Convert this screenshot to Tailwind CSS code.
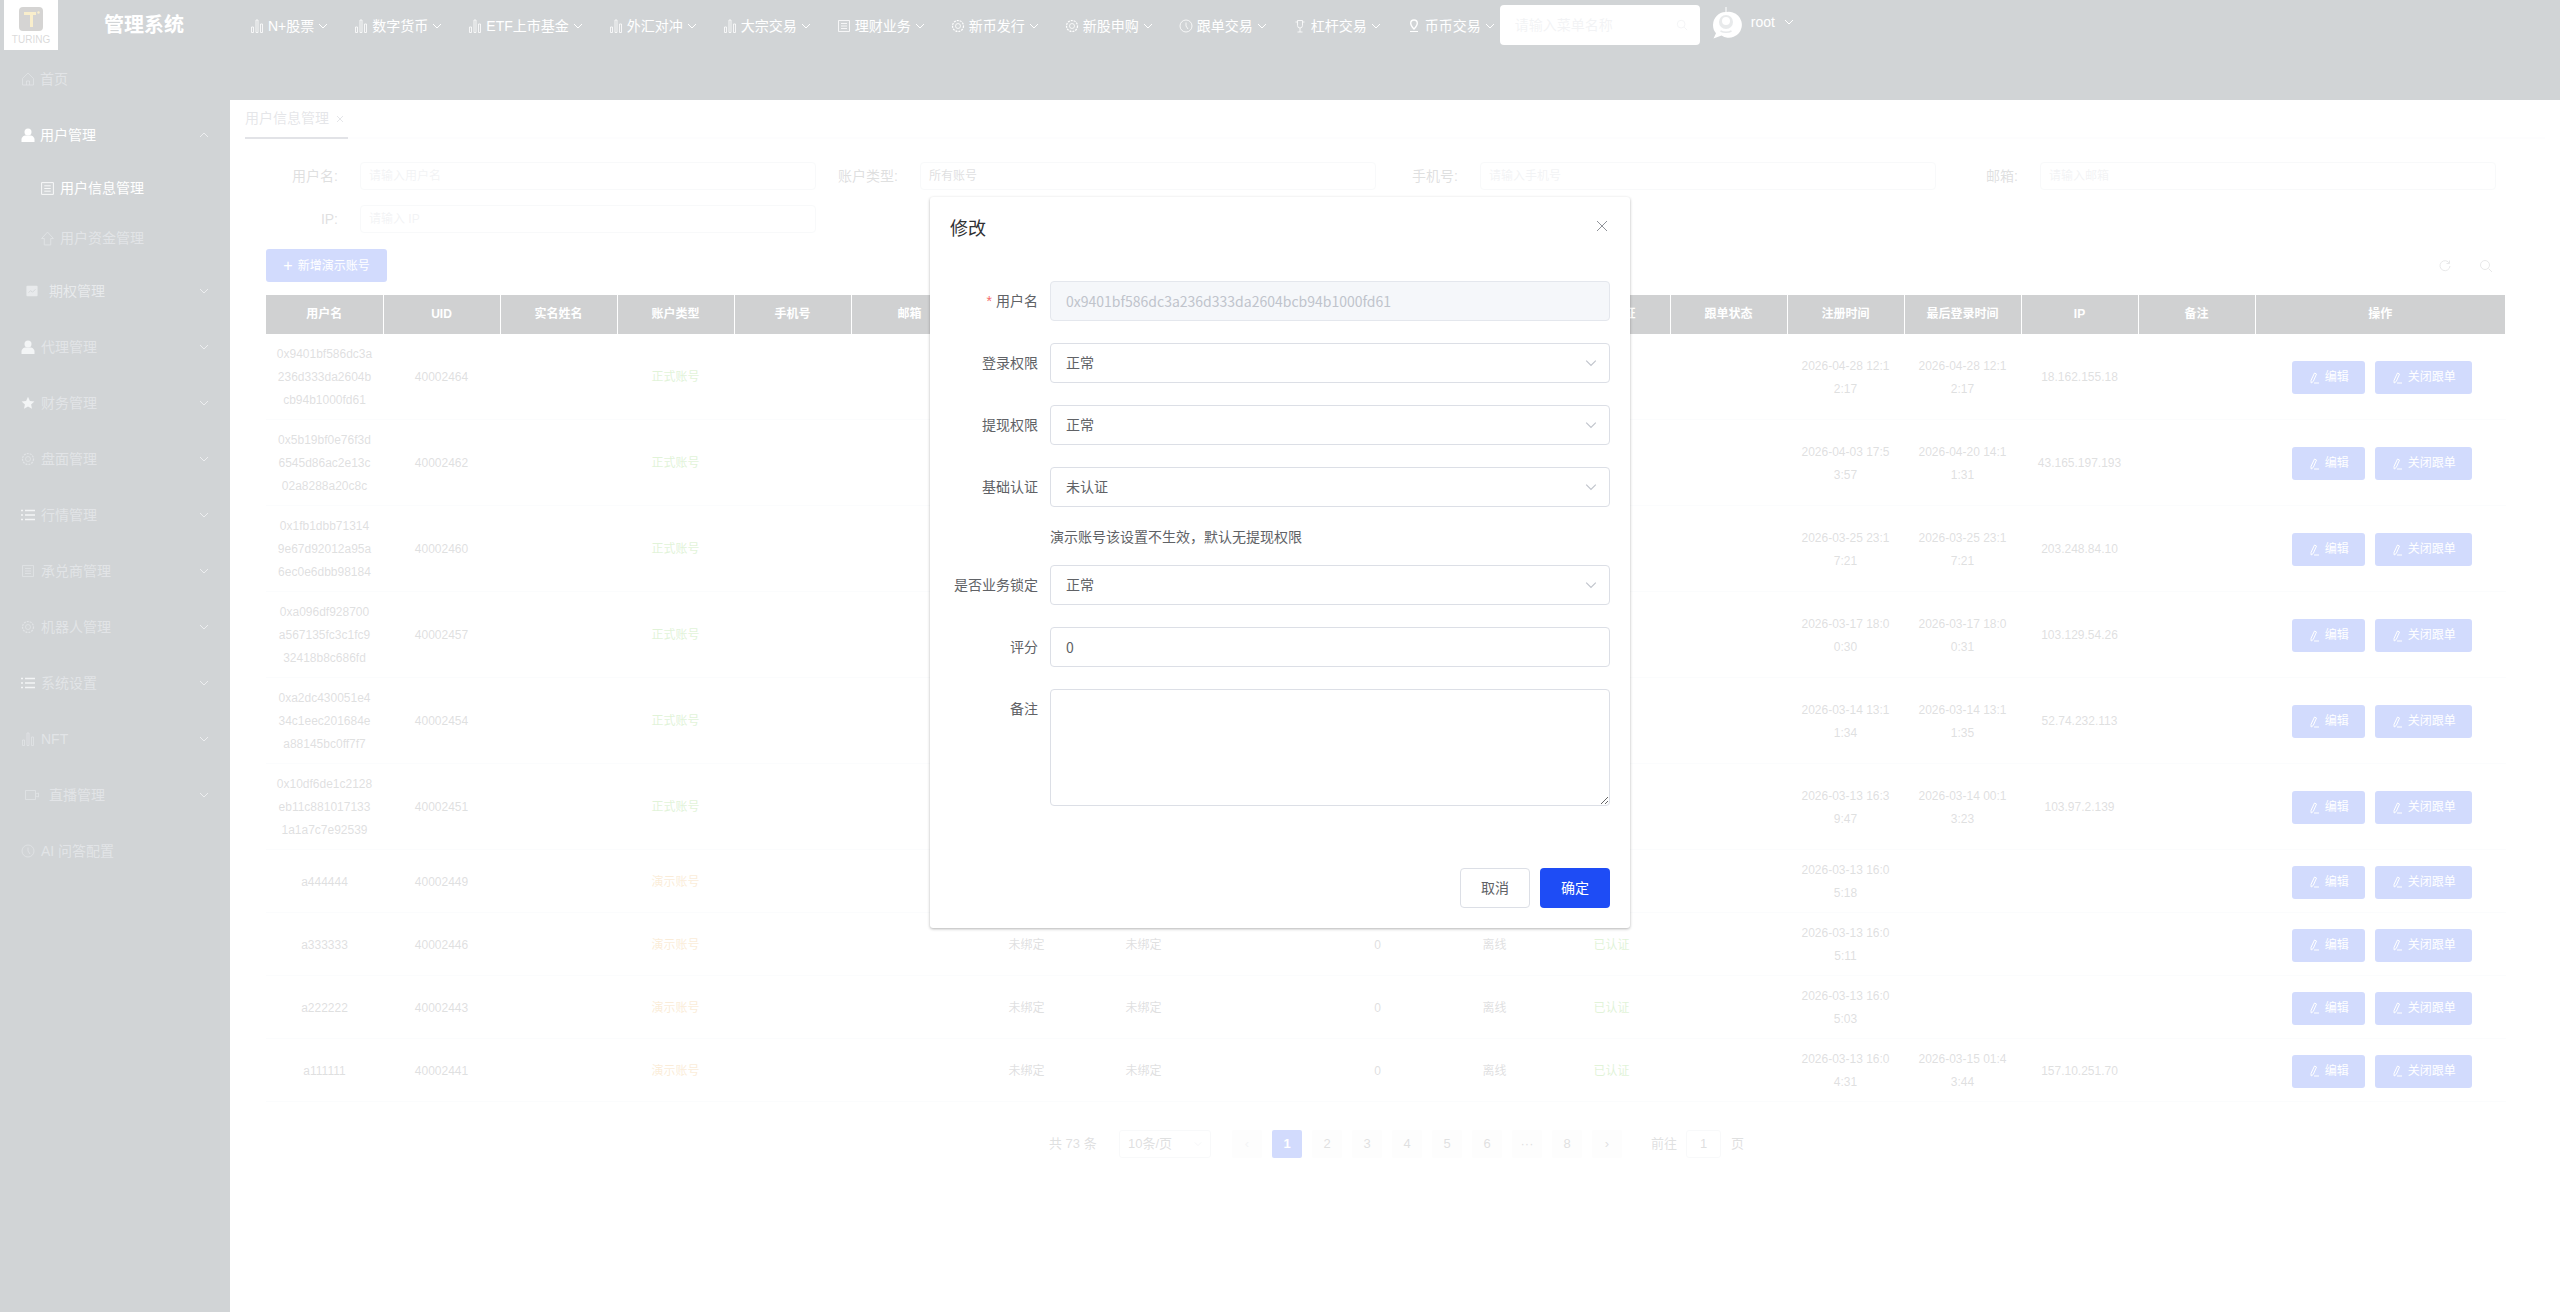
<!DOCTYPE html>
<html lang="zh-CN">
<head>
<meta charset="utf-8">
<title>管理系统</title>
<script src="https://cdn.jsdelivr.net/npm/@tailwindcss/browser@4"></script>
</head>
<body class="m-0">
<svg class="hidden" xmlns="http://www.w3.org/2000/svg">
  <symbol id="bars" viewBox="0 0 14 14"><path fill="none" stroke="currentColor" stroke-width=".8" d="M1.500 8h2v5.500h-2zM6 1h2v12.500H6zM10.500 5h2v8.500h-2z"/></symbol>
  <symbol id="down" viewBox="0 0 10 10"><path fill="none" stroke="currentColor" d="M1 3l4 4 4-4"/></symbol>
  <symbol id="up" viewBox="0 0 10 10"><path fill="none" stroke="currentColor" d="M1 7l4-4 4 4"/></symbol>
  <symbol id="doc" viewBox="0 0 14 14"><path fill="none" stroke="currentColor" stroke-width=".8" d="M1.500 1.500h11v11h-11zM4 4.500h6M4 7h6M4 9.500h6"/></symbol>
  <symbol id="gear" viewBox="0 0 14 14"><circle cx="7" cy="7" r="5.500" fill="none" stroke="currentColor" stroke-width="1.200" stroke-dasharray="2 1"/><circle cx="7" cy="7" r="2.500" fill="none" stroke="currentColor" stroke-width=".8"/></symbol>
  <symbol id="clock" viewBox="0 0 14 14"><circle cx="7" cy="7" r="6" fill="none" stroke="currentColor" stroke-width=".8"/><path fill="none" stroke="currentColor" stroke-width=".8" d="M7 3.500V7l2 3"/></symbol>
  <symbol id="cup" viewBox="0 0 14 14"><path fill="none" stroke="currentColor" stroke-width=".8" d="M4.500 1.500h5v5a2.500 2.500 0 0 1-5 0zM7 9v4M4.500 13h5M2.500 3h2M9.500 3h2"/></symbol>
  <symbol id="pin" viewBox="0 0 14 14"><path fill="none" stroke="currentColor" stroke-width="1.400" d="M7 1a3.300 3.300 0 0 1 3.300 3.300C10.300 6.500 7 10 7 10S3.700 6.500 3.700 4.300A3.300 3.300 0 0 1 7 1z"/><path fill="none" stroke="currentColor" d="M3 12.500h8"/></symbol>
  <symbol id="home" viewBox="0 0 14 14"><path fill="none" stroke="currentColor" stroke-width=".8" d="M7 1L1.500 6.500v6.500h11V6.500zM5.500 13V9h3v4"/></symbol>
  <symbol id="user" viewBox="0 0 14 14"><circle cx="7" cy="4" r="3.500" fill="currentColor"/><path fill="currentColor" d="M.5 14v-2.500C.5 9 3 7.500 4.500 7.500h5c1.500 0 4 1.500 4 4V14z"/></symbol>
  <symbol id="up-house" viewBox="0 0 14 14"><path fill="none" stroke="currentColor" stroke-width=".8" d="M7 1L1.500 7h2.500v6h6V7h2.500z"/></symbol>
  <symbol id="pic" viewBox="0 0 14 14"><rect x=".5" y="1" width="13" height="12" rx="1" fill="currentColor"/><path fill="none" stroke="#192832" d="M3 9l2.500-2.500 2 2L11 5"/></symbol>
  <symbol id="star" viewBox="0 0 14 14"><path fill="currentColor" d="M7 .8l1.900 4.100 4.500.5-3.300 3 .9 4.400L7 10.600 3 12.800l.9-4.400-3.300-3 4.500-.5z"/></symbol>
  <symbol id="list" viewBox="0 0 14 14"><path fill="none" stroke="currentColor" stroke-width="1.400" d="M4 2.500h10M4 7h10M4 11.500h10M0 2.500h2M0 7h2M0 11.500h2"/></symbol>
  <symbol id="video" viewBox="0 0 14 14"><path fill="none" stroke="currentColor" stroke-width=".8" d="M.5 2.500h10v9H.5zM10.500 6l3-1v4l-3-1"/></symbol>
  <symbol id="pen" viewBox="0 0 12 12"><path fill="none" stroke="currentColor" d="M6.500 1L3 8.500l.2 2.500 2-1.500L8.500 2zM6 11h5"/></symbol>
</svg>

<div class="relative flex h-[1312px] w-[2560px] flex-col overflow-hidden bg-[#192832] [font-family:'Liberation_Sans','Noto_Sans_CJK_SC',sans-serif]">

  <header class="flex h-[51px] shrink-0 items-start text-white">
    <div class="ml-[4px] flex h-[50px] w-[54px] flex-col items-center bg-white pt-[7px]">
      <svg class="h-[24px] w-[24px]" viewBox="0 0 24 24"><rect width="24" height="24" rx="4" fill="#2b2a22"/><path fill="#e2ab00" d="M5 5h12v3h-3v12h-3V8H5z"/><circle cx="19.500" cy="5.500" r="1.200" fill="#e2ab00"/></svg>
      <span class="mt-[2px] text-[10px] leading-[14px] text-[#444]">TURING</span>
    </div>
    <div class="ml-[46px] mt-[12px] text-[20px] font-bold leading-[26px]">管理系统</div>
    <nav class="ml-[66px] flex h-[50px] items-center gap-[26px] pt-[2px] text-[14px] text-white">
      <a class="flex items-center"><svg class="mr-[4px] h-[14px] w-[14px]"><use href="#bars"/></svg>N+股票<svg class="ml-[4px] h-[10px] w-[10px]"><use href="#down"/></svg></a>
      <a class="flex items-center"><svg class="mr-[4px] h-[14px] w-[14px]"><use href="#bars"/></svg>数字货币<svg class="ml-[4px] h-[10px] w-[10px]"><use href="#down"/></svg></a>
      <a class="flex items-center"><svg class="mr-[4px] h-[14px] w-[14px]"><use href="#bars"/></svg>ETF上市基金<svg class="ml-[4px] h-[10px] w-[10px]"><use href="#down"/></svg></a>
      <a class="flex items-center"><svg class="mr-[4px] h-[14px] w-[14px]"><use href="#bars"/></svg>外汇对冲<svg class="ml-[4px] h-[10px] w-[10px]"><use href="#down"/></svg></a>
      <a class="flex items-center"><svg class="mr-[4px] h-[14px] w-[14px]"><use href="#bars"/></svg>大宗交易<svg class="ml-[4px] h-[10px] w-[10px]"><use href="#down"/></svg></a>
      <a class="flex items-center"><svg class="mr-[4px] h-[14px] w-[14px]"><use href="#doc"/></svg>理财业务<svg class="ml-[4px] h-[10px] w-[10px]"><use href="#down"/></svg></a>
      <a class="flex items-center"><svg class="mr-[4px] h-[14px] w-[14px]"><use href="#gear"/></svg>新币发行<svg class="ml-[4px] h-[10px] w-[10px]"><use href="#down"/></svg></a>
      <a class="flex items-center"><svg class="mr-[4px] h-[14px] w-[14px]"><use href="#gear"/></svg>新股申购<svg class="ml-[4px] h-[10px] w-[10px]"><use href="#down"/></svg></a>
      <a class="flex items-center"><svg class="mr-[4px] h-[14px] w-[14px]"><use href="#clock"/></svg>跟单交易<svg class="ml-[4px] h-[10px] w-[10px]"><use href="#down"/></svg></a>
      <a class="flex items-center"><svg class="mr-[4px] h-[14px] w-[14px]"><use href="#cup"/></svg>杠杆交易<svg class="ml-[4px] h-[10px] w-[10px]"><use href="#down"/></svg></a>
      <a class="flex items-center"><svg class="mr-[4px] h-[14px] w-[14px]"><use href="#pin"/></svg>币币交易<svg class="ml-[4px] h-[10px] w-[10px]"><use href="#down"/></svg></a>
    </nav>
    <div class="ml-[5px] mt-[5px] flex h-[40px] w-[200px] items-center justify-between rounded-[4px] bg-white pl-[15px] pr-[12px] text-[14px] text-[#c0c4cc]">请输入菜单名称<svg class="h-[12px] w-[12px]" viewBox="0 0 14 14"><circle cx="6" cy="6" r="4.500" fill="none" stroke="currentColor"/><path stroke="currentColor" d="M9.500 9.500l3.500 3.500"/></svg></div>
    <svg class="ml-[10px] mt-[7px] h-[32px] w-[32px]" viewBox="0 0 32 32"><path fill="#fff" d="M15.500 0v5A13 13 0 0 0 3 18c0 3.500 1.200 6.200 3 8.200L3.500 31.500l8-3A13 13 0 1 0 16.500 5V0z"/><circle cx="16" cy="15" r="7" fill="#8a959d"/><circle cx="16" cy="14" r="4" fill="#fff"/><path fill="none" stroke="#8a959d" stroke-width="1.500" d="M10.500 24c3 1.500 8 1.500 11 0"/></svg>
    <span class="ml-[9px] mt-[13px] text-[14px] leading-[18px]">root</span>
    <svg class="ml-[9px] mt-[17px] h-[10px] w-[10px]"><use href="#down"/></svg>
  </header>

  <div class="flex flex-1">
    <aside class="w-[230px] shrink-0 text-[14px] text-[#6d7a85]">
      <div class="flex h-[56px] items-center pl-[21px]"><svg class="mr-[5px] h-[14px] w-[14px]"><use href="#home"/></svg>首页</div>
      <div class="relative flex h-[56px] items-center pl-[21px] text-white"><svg class="mr-[5px] h-[14px] w-[14px]"><use href="#user"/></svg>用户管理<svg class="absolute left-[199px] h-[10px] w-[10px] text-[#a3acb3]"><use href="#up"/></svg></div>
      <div class="flex h-[50px] items-center pl-[40px] text-white"><svg class="mr-[5px] h-[15px] w-[15px]"><use href="#doc"/></svg>用户信息管理</div>
      <div class="flex h-[50px] items-center pl-[40px]"><svg class="mr-[5px] h-[15px] w-[15px]"><use href="#up-house"/></svg>用户资金管理</div>
      <div class="relative flex h-[56px] items-center pl-[26px] text-[#8e98a1]"><svg class="mr-[11px] h-[12px] w-[12px]"><use href="#pic"/></svg>期权管理<svg class="absolute left-[199px] h-[10px] w-[10px] text-[#a3acb3]"><use href="#down"/></svg></div>
      <div class="relative flex h-[56px] items-center pl-[21px]"><svg class="mr-[6px] h-[14px] w-[14px] text-[#c5ccd2]"><use href="#user"/></svg>代理管理<svg class="absolute left-[199px] h-[10px] w-[10px] text-[#a3acb3]"><use href="#down"/></svg></div>
      <div class="relative flex h-[56px] items-center pl-[21px]"><svg class="mr-[6px] h-[14px] w-[14px] text-[#c5ccd2]"><use href="#star"/></svg>财务管理<svg class="absolute left-[199px] h-[10px] w-[10px] text-[#a3acb3]"><use href="#down"/></svg></div>
      <div class="relative flex h-[56px] items-center pl-[21px]"><svg class="mr-[6px] h-[14px] w-[14px]"><use href="#gear"/></svg>盘面管理<svg class="absolute left-[199px] h-[10px] w-[10px] text-[#a3acb3]"><use href="#down"/></svg></div>
      <div class="relative flex h-[56px] items-center pl-[21px]"><svg class="mr-[6px] h-[14px] w-[14px] text-[#c5ccd2]"><use href="#list"/></svg>行情管理<svg class="absolute left-[199px] h-[10px] w-[10px] text-[#a3acb3]"><use href="#down"/></svg></div>
      <div class="relative flex h-[56px] items-center pl-[21px]"><svg class="mr-[6px] h-[14px] w-[14px]"><use href="#doc"/></svg>承兑商管理<svg class="absolute left-[199px] h-[10px] w-[10px] text-[#a3acb3]"><use href="#down"/></svg></div>
      <div class="relative flex h-[56px] items-center pl-[21px]"><svg class="mr-[6px] h-[14px] w-[14px]"><use href="#gear"/></svg>机器人管理<svg class="absolute left-[199px] h-[10px] w-[10px] text-[#a3acb3]"><use href="#down"/></svg></div>
      <div class="relative flex h-[56px] items-center pl-[21px]"><svg class="mr-[6px] h-[14px] w-[14px] text-[#c5ccd2]"><use href="#list"/></svg>系统设置<svg class="absolute left-[199px] h-[10px] w-[10px] text-[#a3acb3]"><use href="#down"/></svg></div>
      <div class="relative flex h-[56px] items-center pl-[21px]"><svg class="mr-[6px] h-[14px] w-[14px]"><use href="#bars"/></svg>NFT<svg class="absolute left-[199px] h-[10px] w-[10px] text-[#a3acb3]"><use href="#down"/></svg></div>
      <div class="relative flex h-[56px] items-center pl-[25px]"><svg class="mr-[10px] h-[14px] w-[14px]"><use href="#video"/></svg>直播管理<svg class="absolute left-[199px] h-[10px] w-[10px] text-[#a3acb3]"><use href="#down"/></svg></div>
      <div class="flex h-[56px] items-center pl-[21px]"><svg class="mr-[6px] h-[14px] w-[14px]"><use href="#clock"/></svg>AI 问答配置</div>
    </aside>

    <div class="flex flex-1 flex-col pt-[49px]">
      <main class="flex-1 bg-white">
        <div class="mx-[15px] h-[39px] border-b-2 border-[#f5f6fa]">
          <div class="flex h-[39px] w-[103px] items-center border-b-2 border-[#6e7389] text-[14px] text-[#7d8190]">用户信息管理<svg class="ml-[7px] h-[8px] w-[8px]" viewBox="0 0 8 8"><path fill="none" stroke="currentColor" d="M1 1l6 6M7 1L1 7"/></svg></div>
        </div>

        <form class="ml-[30px] mt-[23px] grid w-[2240px] grid-cols-4 gap-y-[15px] text-[14px] text-[#606266]">
          <div class="flex items-center"><label class="w-[78px] text-right">用户名:</label><div class="ml-[22px] flex h-[28px] w-[456px] items-center rounded-[4px] border border-[#dcdfe6] px-[8px] text-[12px] text-[#c0c4cc]">请输入用户名</div></div>
          <div class="flex items-center"><label class="w-[78px] text-right">账户类型:</label><div class="ml-[22px] flex h-[28px] w-[456px] items-center rounded-[4px] border border-[#dcdfe6] px-[8px] text-[12px] text-[#606266]">所有账号</div></div>
          <div class="flex items-center"><label class="w-[78px] text-right">手机号:</label><div class="ml-[22px] flex h-[28px] w-[456px] items-center rounded-[4px] border border-[#dcdfe6] px-[8px] text-[12px] text-[#c0c4cc]">请输入手机号</div></div>
          <div class="flex items-center"><label class="w-[78px] text-right">邮箱:</label><div class="ml-[22px] flex h-[28px] w-[456px] items-center rounded-[4px] border border-[#dcdfe6] px-[8px] text-[12px] text-[#c0c4cc]">请输入邮箱</div></div>
          <div class="flex items-center"><label class="w-[78px] text-right">IP:</label><div class="ml-[22px] flex h-[28px] w-[456px] items-center rounded-[4px] border border-[#dcdfe6] px-[8px] text-[12px] text-[#c0c4cc]">请输入 IP</div></div>
        </form>

        <div class="ml-[36px] mr-[54px] mt-[16px] flex h-[33px] items-center justify-between">
          <button class="flex h-[33px] w-[121px] items-center justify-center rounded-[3px] bg-[#1e4cf5] text-[12px] text-white"><span class="mr-[5px] text-[16px] leading-none">+</span>新增演示账号</button>
          <div class="mr-[13px] flex items-center gap-[27px] text-[#8b8d92]">
            <svg class="h-[14px] w-[14px]" viewBox="0 0 14 14"><path fill="none" stroke="currentColor" d="M11.500 4.500A5 5 0 1 0 12 7M11.500 1.500v3h-3"/></svg>
            <svg class="h-[14px] w-[14px]" viewBox="0 0 14 14"><circle cx="6" cy="6" r="4.500" fill="none" stroke="currentColor"/><path stroke="currentColor" d="M9.500 9.500l3.500 3.500"/></svg>
          </div>
        </div>

        <table class="ml-[36px] mt-[13px] w-[2240px] table-fixed border-collapse text-center text-[12px] leading-[23px] text-[#606266] [&_td]:break-all [&_td]:border-b [&_td]:border-[#ebeef5] [&_td]:px-[10.5px] [&_td]:pb-[7px] [&_td]:pt-[9px] [&_th]:h-[39px] [&_th]:border-r [&_th]:border-white [&_th]:bg-[#141b20] [&_th]:font-bold [&_th]:text-white">
          <colgroup><col class="w-[117px]"><col class="w-[117px]"><col class="w-[117px]"><col class="w-[117px]"><col class="w-[117px]"><col class="w-[117px]"><col class="w-[117px]"><col class="w-[117px]"><col class="w-[117px]"><col class="w-[117px]"><col class="w-[117px]"><col class="w-[117px]"><col class="w-[117px]"><col class="w-[117px]"><col class="w-[117px]"><col class="w-[117px]"><col class="w-[117px]"><col></colgroup>
          <thead><tr><th>用户名</th><th>UID</th><th>实名姓名</th><th>账户类型</th><th>手机号</th><th>邮箱</th><th></th><th></th><th></th><th></th><th></th><th>实名认证</th><th>跟单状态</th><th>注册时间</th><th>最后登录时间</th><th>IP</th><th>备注</th><th>操作</th></tr></thead>
          <tbody>
            <tr><td>0x9401bf586dc3a236d333da2604bcb94b1000fd61</td><td>40002464</td><td></td><td class="text-[#67c23a]">正式账号</td><td></td><td></td><td></td><td></td><td></td><td></td><td></td><td></td><td></td><td>2026-04-28 12:12:17</td><td>2026-04-28 12:12:17</td><td>18.162.155.18</td><td></td><td><div class="flex justify-center gap-[10px] pl-[3px]"><button class="flex h-[33px] w-[73px] items-center justify-center rounded-[3px] bg-[#1e4cf5] text-white"><svg class="mr-[5px] h-[12px] w-[12px]"><use href="#pen"/></svg>编辑</button><button class="flex h-[33px] w-[97px] items-center justify-center rounded-[3px] bg-[#1e4cf5] text-white"><svg class="mr-[5px] h-[12px] w-[12px]"><use href="#pen"/></svg>关闭跟单</button></div></td></tr>
            <tr><td>0x5b19bf0e76f3d6545d86ac2e13c02a8288a20c8c</td><td>40002462</td><td></td><td class="text-[#67c23a]">正式账号</td><td></td><td></td><td></td><td></td><td></td><td></td><td></td><td></td><td></td><td>2026-04-03 17:53:57</td><td>2026-04-20 14:11:31</td><td>43.165.197.193</td><td></td><td><div class="flex justify-center gap-[10px] pl-[3px]"><button class="flex h-[33px] w-[73px] items-center justify-center rounded-[3px] bg-[#1e4cf5] text-white"><svg class="mr-[5px] h-[12px] w-[12px]"><use href="#pen"/></svg>编辑</button><button class="flex h-[33px] w-[97px] items-center justify-center rounded-[3px] bg-[#1e4cf5] text-white"><svg class="mr-[5px] h-[12px] w-[12px]"><use href="#pen"/></svg>关闭跟单</button></div></td></tr>
            <tr><td>0x1fb1dbb713149e67d92012a95a6ec0e6dbb98184</td><td>40002460</td><td></td><td class="text-[#67c23a]">正式账号</td><td></td><td></td><td></td><td></td><td></td><td></td><td></td><td></td><td></td><td>2026-03-25 23:17:21</td><td>2026-03-25 23:17:21</td><td>203.248.84.10</td><td></td><td><div class="flex justify-center gap-[10px] pl-[3px]"><button class="flex h-[33px] w-[73px] items-center justify-center rounded-[3px] bg-[#1e4cf5] text-white"><svg class="mr-[5px] h-[12px] w-[12px]"><use href="#pen"/></svg>编辑</button><button class="flex h-[33px] w-[97px] items-center justify-center rounded-[3px] bg-[#1e4cf5] text-white"><svg class="mr-[5px] h-[12px] w-[12px]"><use href="#pen"/></svg>关闭跟单</button></div></td></tr>
            <tr><td>0xa096df928700a567135fc3c1fc932418b8c686fd</td><td>40002457</td><td></td><td class="text-[#67c23a]">正式账号</td><td></td><td></td><td></td><td></td><td></td><td></td><td></td><td></td><td></td><td>2026-03-17 18:00:30</td><td>2026-03-17 18:00:31</td><td>103.129.54.26</td><td></td><td><div class="flex justify-center gap-[10px] pl-[3px]"><button class="flex h-[33px] w-[73px] items-center justify-center rounded-[3px] bg-[#1e4cf5] text-white"><svg class="mr-[5px] h-[12px] w-[12px]"><use href="#pen"/></svg>编辑</button><button class="flex h-[33px] w-[97px] items-center justify-center rounded-[3px] bg-[#1e4cf5] text-white"><svg class="mr-[5px] h-[12px] w-[12px]"><use href="#pen"/></svg>关闭跟单</button></div></td></tr>
            <tr><td>0xa2dc430051e434c1eec201684ea88145bc0ff7f7</td><td>40002454</td><td></td><td class="text-[#67c23a]">正式账号</td><td></td><td></td><td></td><td></td><td></td><td></td><td></td><td></td><td></td><td>2026-03-14 13:11:34</td><td>2026-03-14 13:11:35</td><td>52.74.232.113</td><td></td><td><div class="flex justify-center gap-[10px] pl-[3px]"><button class="flex h-[33px] w-[73px] items-center justify-center rounded-[3px] bg-[#1e4cf5] text-white"><svg class="mr-[5px] h-[12px] w-[12px]"><use href="#pen"/></svg>编辑</button><button class="flex h-[33px] w-[97px] items-center justify-center rounded-[3px] bg-[#1e4cf5] text-white"><svg class="mr-[5px] h-[12px] w-[12px]"><use href="#pen"/></svg>关闭跟单</button></div></td></tr>
            <tr><td>0x10df6de1c2128eb11c8810171331a1a7c7e92539</td><td>40002451</td><td></td><td class="text-[#67c23a]">正式账号</td><td></td><td></td><td></td><td></td><td></td><td></td><td></td><td></td><td></td><td>2026-03-13 16:39:47</td><td>2026-03-14 00:13:23</td><td>103.97.2.139</td><td></td><td><div class="flex justify-center gap-[10px] pl-[3px]"><button class="flex h-[33px] w-[73px] items-center justify-center rounded-[3px] bg-[#1e4cf5] text-white"><svg class="mr-[5px] h-[12px] w-[12px]"><use href="#pen"/></svg>编辑</button><button class="flex h-[33px] w-[97px] items-center justify-center rounded-[3px] bg-[#1e4cf5] text-white"><svg class="mr-[5px] h-[12px] w-[12px]"><use href="#pen"/></svg>关闭跟单</button></div></td></tr>
            <tr><td>a444444</td><td>40002449</td><td></td><td class="text-[#e6a23c]">演示账号</td><td></td><td></td><td></td><td></td><td></td><td></td><td></td><td></td><td></td><td>2026-03-13 16:05:18</td><td></td><td></td><td></td><td><div class="flex justify-center gap-[10px] pl-[3px]"><button class="flex h-[33px] w-[73px] items-center justify-center rounded-[3px] bg-[#1e4cf5] text-white"><svg class="mr-[5px] h-[12px] w-[12px]"><use href="#pen"/></svg>编辑</button><button class="flex h-[33px] w-[97px] items-center justify-center rounded-[3px] bg-[#1e4cf5] text-white"><svg class="mr-[5px] h-[12px] w-[12px]"><use href="#pen"/></svg>关闭跟单</button></div></td></tr>
            <tr><td>a333333</td><td>40002446</td><td></td><td class="text-[#e6a23c]">演示账号</td><td></td><td></td><td>未绑定</td><td>未绑定</td><td></td><td>0</td><td>离线</td><td class="text-[#67c23a]">已认证</td><td></td><td>2026-03-13 16:05:11</td><td></td><td></td><td></td><td><div class="flex justify-center gap-[10px] pl-[3px]"><button class="flex h-[33px] w-[73px] items-center justify-center rounded-[3px] bg-[#1e4cf5] text-white"><svg class="mr-[5px] h-[12px] w-[12px]"><use href="#pen"/></svg>编辑</button><button class="flex h-[33px] w-[97px] items-center justify-center rounded-[3px] bg-[#1e4cf5] text-white"><svg class="mr-[5px] h-[12px] w-[12px]"><use href="#pen"/></svg>关闭跟单</button></div></td></tr>
            <tr><td>a222222</td><td>40002443</td><td></td><td class="text-[#e6a23c]">演示账号</td><td></td><td></td><td>未绑定</td><td>未绑定</td><td></td><td>0</td><td>离线</td><td class="text-[#67c23a]">已认证</td><td></td><td>2026-03-13 16:05:03</td><td></td><td></td><td></td><td><div class="flex justify-center gap-[10px] pl-[3px]"><button class="flex h-[33px] w-[73px] items-center justify-center rounded-[3px] bg-[#1e4cf5] text-white"><svg class="mr-[5px] h-[12px] w-[12px]"><use href="#pen"/></svg>编辑</button><button class="flex h-[33px] w-[97px] items-center justify-center rounded-[3px] bg-[#1e4cf5] text-white"><svg class="mr-[5px] h-[12px] w-[12px]"><use href="#pen"/></svg>关闭跟单</button></div></td></tr>
            <tr><td>a111111</td><td>40002441</td><td></td><td class="text-[#e6a23c]">演示账号</td><td></td><td></td><td>未绑定</td><td>未绑定</td><td></td><td>0</td><td>离线</td><td class="text-[#67c23a]">已认证</td><td></td><td>2026-03-13 16:04:31</td><td>2026-03-15 01:43:44</td><td>157.10.251.70</td><td></td><td><div class="flex justify-center gap-[10px] pl-[3px]"><button class="flex h-[33px] w-[73px] items-center justify-center rounded-[3px] bg-[#1e4cf5] text-white"><svg class="mr-[5px] h-[12px] w-[12px]"><use href="#pen"/></svg>编辑</button><button class="flex h-[33px] w-[97px] items-center justify-center rounded-[3px] bg-[#1e4cf5] text-white"><svg class="mr-[5px] h-[12px] w-[12px]"><use href="#pen"/></svg>关闭跟单</button></div></td></tr>
          </tbody>
        </table>

        <div class="ml-[819px] mt-[28px] flex h-[28px] items-center text-[13px] text-[#606266]">
          <span class="w-[48px]">共 73 条</span>
          <div class="ml-[22px] flex h-[28px] w-[92px] items-center justify-between rounded-[3px] border border-[#dcdfe6] px-[8px] text-[#606266]">10条/页<svg class="h-[8px] w-[8px] text-[#c0c4cc]"><use href="#down"/></svg></div>
          <div class="ml-[21px] flex gap-[10px] text-center leading-[28px]">
            <span class="h-[28px] w-[30px] rounded-[2px] bg-[#f4f4f5] text-[#c0c4cc]">‹</span>
            <span class="h-[28px] w-[30px] rounded-[2px] bg-[#1e4cf5] font-bold text-white">1</span>
            <span class="h-[28px] w-[30px] rounded-[2px] bg-[#f4f4f5]">2</span>
            <span class="h-[28px] w-[30px] rounded-[2px] bg-[#f4f4f5]">3</span>
            <span class="h-[28px] w-[30px] rounded-[2px] bg-[#f4f4f5]">4</span>
            <span class="h-[28px] w-[30px] rounded-[2px] bg-[#f4f4f5]">5</span>
            <span class="h-[28px] w-[30px] rounded-[2px] bg-[#f4f4f5]">6</span>
            <span class="h-[28px] w-[30px] rounded-[2px] bg-[#f4f4f5]">···</span>
            <span class="h-[28px] w-[30px] rounded-[2px] bg-[#f4f4f5]">8</span>
            <span class="h-[28px] w-[30px] rounded-[2px] bg-[#f4f4f5]">›</span>
          </div>
          <span class="ml-[29px]">前往</span>
          <div class="ml-[9px] h-[28px] w-[35px] rounded-[3px] border border-[#dcdfe6] text-center leading-[26px]">1</div>
          <span class="ml-[10px]">页</span>
        </div>
      </main>
    </div>
  </div>

  <div class="absolute inset-0 bg-white/80"></div>

  <div class="absolute inset-0 flex justify-center pt-[197px]">
    <div class="flex h-[731px] w-[700px] flex-col rounded-[3px] bg-white px-[20px] shadow-[0_1px_3px_rgba(0,0,0,0.3)]">
      <div class="flex h-[84px] items-start justify-between pt-[20px]">
        <span class="text-[18px] leading-[24px] text-[#303133]">修改</span>
        <svg class="mr-[2px] mt-[3px] h-[12px] w-[12px] text-[#909399]" viewBox="0 0 12 12"><path fill="none" stroke="currentColor" d="M1 1l10 10M11 1L1 11"/></svg>
      </div>
      <div class="text-[14px] text-[#606266]">
        <div class="mb-[22px] flex items-center">
          <label class="w-[88px] text-right"><span class="mr-[4px] text-[#f56c6c]">*</span>用户名</label>
          <input disabled value="0x9401bf586dc3a236d333da2604bcb94b1000fd61" class="ml-[12px] h-[40px] w-[560px] rounded-[4px] border border-[#e4e7ed] bg-[#f5f7fa] px-[15px] text-[14px] text-[#c0c4cc] [font-family:'Noto_Sans_CJK_SC',sans-serif]">
        </div>
        <div class="mb-[22px] flex items-center">
          <label class="w-[88px] text-right">登录权限</label>
          <div class="ml-[12px] flex h-[40px] w-[560px] items-center justify-between rounded-[4px] border border-[#dcdfe6] pl-[15px] pr-[12px]">正常<svg class="h-[12px] w-[12px] text-[#c0c4cc]"><use href="#down"/></svg></div>
        </div>
        <div class="mb-[22px] flex items-center">
          <label class="w-[88px] text-right">提现权限</label>
          <div class="ml-[12px] flex h-[40px] w-[560px] items-center justify-between rounded-[4px] border border-[#dcdfe6] pl-[15px] pr-[12px]">正常<svg class="h-[12px] w-[12px] text-[#c0c4cc]"><use href="#down"/></svg></div>
        </div>
        <div class="mb-[19px] flex items-center">
          <label class="w-[88px] text-right">基础认证</label>
          <div class="ml-[12px] flex h-[40px] w-[560px] items-center justify-between rounded-[4px] border border-[#dcdfe6] pl-[15px] pr-[12px]">未认证<svg class="h-[12px] w-[12px] text-[#c0c4cc]"><use href="#down"/></svg></div>
        </div>
        <div class="mb-[17px] ml-[100px] h-[22px] leading-[22px]">演示账号该设置不生效，默认无提现权限</div>
        <div class="mb-[22px] flex items-center">
          <label class="w-[88px] text-right">是否业务锁定</label>
          <div class="ml-[12px] flex h-[40px] w-[560px] items-center justify-between rounded-[4px] border border-[#dcdfe6] pl-[15px] pr-[12px]">正常<svg class="h-[12px] w-[12px] text-[#c0c4cc]"><use href="#down"/></svg></div>
        </div>
        <div class="mb-[22px] flex items-center">
          <label class="w-[88px] text-right">评分</label>
          <input value="0" class="ml-[12px] h-[40px] w-[560px] rounded-[4px] border border-[#dcdfe6] px-[15px] text-[14px] text-[#606266] [font-family:'Noto_Sans_CJK_SC',sans-serif]">
        </div>
        <div class="flex items-start">
          <label class="w-[88px] pt-[9px] text-right leading-[22px]">备注</label>
          <textarea class="ml-[12px] h-[117px] w-[560px] rounded-[4px] border border-[#dcdfe6] px-[15px] py-[5px] text-[14px]"></textarea>
        </div>
      </div>
      <div class="mt-[62px] flex justify-end gap-[10px] text-[14px]">
        <button class="h-[40px] w-[70px] rounded-[4px] border border-[#dcdfe6] bg-white text-[#606266]">取消</button>
        <button class="h-[40px] w-[70px] rounded-[4px] bg-[#1e4cf5] text-white">确定</button>
      </div>
    </div>
  </div>
</div>
</body>
</html>
